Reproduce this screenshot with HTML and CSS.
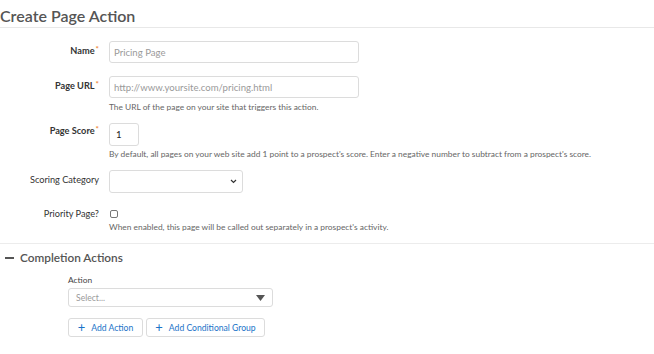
FILE: index.html
```html
<!DOCTYPE html>
<html lang="en">
<head>
    <meta charset="UTF-8">
    <meta name="viewport" content="width=device-width, initial-scale=1.0">
    <title>Create Page Action</title>
    <link rel="stylesheet" href="styles.css">
</head>
<body>
    <h1 class="page-title">Create Page Action</h1>

    <div class="form">
        <div class="field field-name">
            <label class="label required">Name<span class="star">*</span></label>
            <div class="control">
                <div class="input input-wide"><span class="placeholder">Pricing Page</span></div>
            </div>
        </div>

        <div class="field field-url">
            <label class="label required">Page URL<span class="star">*</span></label>
            <div class="control">
                <div class="input input-wide"><span class="placeholder">http://www.yoursite.com/pricing.html</span></div>
                <div class="hint">The URL of the page on your site that triggers this action.</div>
            </div>
        </div>

        <div class="field field-score">
            <label class="label required">Page Score<span class="star">*</span></label>
            <div class="control">
                <div class="input input-score">1</div>
                <div class="hint">By default, all pages on your web site add 1 point to a prospect's score. Enter a negative number to subtract from a prospect's score.</div>
            </div>
        </div>

        <div class="field field-category">
            <label class="label">Scoring Category</label>
            <div class="control">
                <div class="input input-select">
                    <svg width="7" height="5" viewBox="0 0 7 5"><path d="M1 1 L3.5 3.5 L6 1" fill="none" stroke="#333" stroke-width="1.2"/></svg>
                </div>
            </div>
        </div>

        <div class="field field-priority">
            <label class="label">Priority Page?</label>
            <div class="control">
                <span class="checkbox"></span>
                <div class="hint">When enabled, this page will be called out separately in a prospect's activity.</div>
            </div>
        </div>
    </div>

    <div class="section">
        <h2 class="section-title"><span class="dash"></span>Completion Actions</h2>
        <div class="actions">
            <div class="action-label">Action</div>
            <div class="dropdown">
                <span class="placeholder">Select...</span>
                <svg width="9" height="6" viewBox="0 0 9 6"><path d="M0 0 H9 L4.5 6 Z" fill="#555"/></svg>
            </div>
            <div class="buttons">
                <button class="btn btn-action"><span class="plus">+</span>Add Action</button>
                <button class="btn btn-group"><span class="plus">+</span>Add Conditional Group</button>
            </div>
        </div>
    </div>
</body>
</html>
```

FILE: styles.css
```css
body {
    margin: 0;
    font-family: Lato, "Open Sans", Arial, sans-serif;
    color: #333;
    background-color: #fff;
}
.page-title {
    margin: 0;
    padding-top: 6px;
    padding-bottom: 1px;
    font-size: 16px;
    line-height: 20px;
    font-weight: 600;
    color: #555;
    border-bottom: 1px solid #e8e8e8;
}
.form {
    padding-top: 13px;
    padding-bottom: 10px;
    border-bottom: 1px solid #ececec;
}
.field {
    display: flex;
}
.label {
    width: 99px;
    padding-right: 10px;
    text-align: right;
    font-size: 9.2px;
    line-height: 12px;
    color: #333;
}
.label.required {
    font-weight: 700;
}
.star {
    color: #f08a3c;
    font-size: 8px;
    vertical-align: top;
    position: relative;
    top: -2px;
    margin-left: 1px;
}
.control {
    display: flex;
    flex-direction: column;
    align-items: flex-start;
}
.input {
    box-sizing: border-box;
    border: 1px solid #dcdcdc;
    border-radius: 3px;
    font-size: 9.6px;
    display: flex;
    align-items: center;
    padding: 0 4px;
}
.input-wide {
    width: 250px;
    height: 22px;
}
.input-score {
    width: 30px;
    height: 23px;
    color: #222;
    padding-left: 6px;
}
.input-select {
    width: 134px;
    height: 23px;
    justify-content: flex-end;
    padding-right: 5px;
}
.placeholder {
    color: #9a9a9a;
}
.hint {
    font-size: 8.4px;
    line-height: 12px;
    color: #666;
}
.field-name .label {
    padding-top: 4px;
}
.field-name {
    margin-bottom: 13px;
}
.field-url .label {
    padding-top: 4px;
}
.field-url .hint {
    margin-top: 3px;
}
.field-url {
    margin-bottom: 10px;
}
.field-score .label {
    padding-top: 2px;
}
.field-score .hint {
    margin-top: 2px;
}
.field-score {
    margin-bottom: 10px;
}
.field-category .label {
    padding-top: 4px;
}
.field-category {
    margin-bottom: 15px;
}
.field-priority .label {
    font-weight: 400;
}
.checkbox {
    display: block;
    box-sizing: border-box;
    width: 8px;
    height: 8px;
    margin-top: 2px;
    margin-left: 1px;
    border: 1px solid #777;
    border-radius: 2px;
}
.field-priority .hint {
    margin-top: 3px;
}
.section-title {
    margin: 6px 0 0;
    display: flex;
    align-items: center;
    font-size: 11.8px;
    line-height: 16px;
    font-weight: 600;
    color: #555;
}
.dash {
    display: block;
    width: 9px;
    height: 2px;
    background-color: #555;
    margin-left: 5px;
    margin-right: 6px;
}
.actions {
    padding-left: 68px;
}
.action-label {
    margin-top: 8px;
    font-size: 8.4px;
    line-height: 12px;
    color: #444;
}
.dropdown {
    box-sizing: border-box;
    width: 205px;
    height: 19px;
    margin-top: 2px;
    border: 1px solid #dcdcdc;
    border-radius: 3px;
    display: flex;
    align-items: center;
    justify-content: space-between;
    padding: 0 7px;
    font-size: 8.6px;
}
.buttons {
    display: flex;
    gap: 3px;
    margin-top: 11px;
}
.btn {
    box-sizing: border-box;
    height: 19px;
    padding: 0;
    background-color: #fff;
    border: 1px solid #dcdcdc;
    border-radius: 3px;
    color: #1a73c8;
    font-family: inherit;
    font-size: 8.6px;
    white-space: nowrap;
    display: flex;
    align-items: center;
    justify-content: center;
    cursor: pointer;
}
.btn-action {
    width: 75px;
}
.btn-group {
    width: 119px;
}
.plus {
    font-size: 13px;
    font-weight: 400;
    margin-right: 6px;
    line-height: 1;
}
```
